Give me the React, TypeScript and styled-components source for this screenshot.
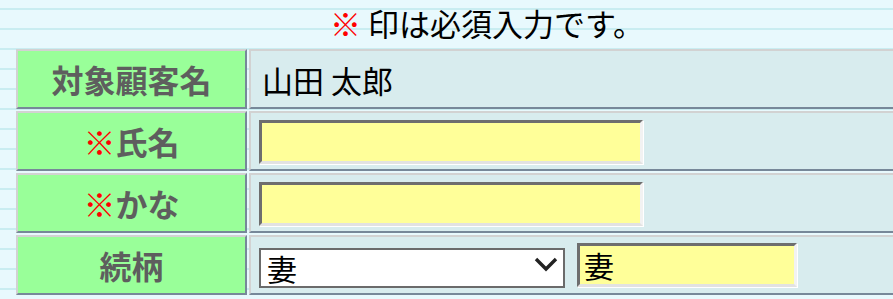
import React, { useState } from "react";
import styled, { createGlobalStyle } from "styled-components";

const GlobalStyle = createGlobalStyle`
  html, body {
    margin: 0;
    padding: 0;
    overflow: hidden;
  }
  body {
    font-family: "Noto Sans CJK JP", "Noto Sans", sans-serif;
    background-color: #e8f9fd;
    background-image: repeating-linear-gradient(
      to bottom,
      transparent 0px,
      transparent 8px,
      #c9edf1 8px,
      #c9edf1 10px,
      transparent 10px,
      transparent 20px
    );
  }
`;

const Page = styled.div`
  width: 960px;
  padding-left: 14px;
  box-sizing: border-box;
`;

const Notice = styled.div`
  height: 47px;
  line-height: 46px;
  text-align: center;
  font-size: 31px;
  color: #000;
`;

const Mark = styled.span`
  color: #ff0000;
`;

const FormTable = styled.table`
  border-collapse: separate;
  border-spacing: 2px;
  width: 944px;
`;

const LabelCell = styled.th`
  width: 227px;
  height: 56px;
  padding: 0;
  background: #99ff99;
  color: #5e5e5e;
  font-size: 32px;
  font-weight: bold;
  text-align: center;
  border-style: solid;
  border-width: 2px;
  border-color: #d2d2d2 #778899 #778899 #d2d2d2;
`;

const ReqMark = styled.span`
  color: #ff0000;
  font-weight: normal;
`;

const ValueCell = styled.td`
  height: 56px;
  padding: 0 0 0 8px;
  background: #d8ecee;
  font-size: 31px;
  color: #000;
  border-style: solid;
  border-width: 2px;
  border-color: #d2d2d2 #778899 #778899 #d2d2d2;
`;

const ValueText = styled.span`
  padding-left: 3px;
`;

const FieldRow = styled.div`
  display: flex;
  align-items: center;
  gap: 12px;
`;

const TextInput = styled.input<{ $w: number }>`
  width: ${(p) => p.$w}px;
  height: 44px;
  box-sizing: border-box;
  margin: 0;
  padding: 0 4px;
  background: #ffff99;
  font-family: inherit;
  font-size: 30px;
  color: #000;
  border-style: solid;
  border-width: 3px;
  border-color: #6e6e6e #f2f2f2 #e2e2e2 #6e6e6e;
  box-shadow: 1px 1px 0 #ffffff;
  outline: none;
`;

const SelectWrap = styled.div`
  position: relative;
  width: 306px;
  height: 40px;
`;

const Select = styled.select`
  appearance: none;
  width: 100%;
  height: 100%;
  box-sizing: border-box;
  margin: 0;
  padding: 0 0 0 6px;
  background: #ffffff;
  border: 2px solid #6b6b6b;
  border-radius: 0;
  font-family: inherit;
  font-size: 30px;
  line-height: 36px;
  color: #000;
  outline: none;
`;

const Chevron = styled.svg`
  position: absolute;
  right: 7px;
  top: 12px;
  pointer-events: none;
`;

const relations = ["妻", "夫", "子", "父", "母", "その他"];

const App: React.FC = () => {
  const [name, setName] = useState<string>("");
  const [kana, setKana] = useState<string>("");
  const [relation, setRelation] = useState<string>("妻");
  const [relationText, setRelationText] = useState<string>("妻");

  return (
    <>
      <GlobalStyle />
      <Page>
        <Notice>
          <Mark>※</Mark> 印は必須入力です。
        </Notice>
        <FormTable>
          <tbody>
            <tr>
              <LabelCell>対象顧客名</LabelCell>
              <ValueCell>
                <ValueText>山田 太郎</ValueText>
              </ValueCell>
            </tr>
            <tr>
              <LabelCell>
                <ReqMark>※</ReqMark>氏名
              </LabelCell>
              <ValueCell>
                <TextInput
                  $w={384}
                  value={name}
                  onChange={(e) => setName(e.target.value)}
                />
              </ValueCell>
            </tr>
            <tr>
              <LabelCell>
                <ReqMark>※</ReqMark>かな
              </LabelCell>
              <ValueCell>
                <TextInput
                  $w={384}
                  value={kana}
                  onChange={(e) => setKana(e.target.value)}
                />
              </ValueCell>
            </tr>
            <tr>
              <LabelCell>続柄</LabelCell>
              <ValueCell>
                <FieldRow>
                  <SelectWrap>
                    <Select
                      value={relation}
                      onChange={(e) => setRelation(e.target.value)}
                    >
                      {relations.map((r) => (
                        <option key={r} value={r}>
                          {r}
                        </option>
                      ))}
                    </Select>
                    <Chevron width="24" height="15" viewBox="0 0 24 15">
                      <path
                        d="M2 2 L12 12 L22 2"
                        fill="none"
                        stroke="#222"
                        strokeWidth="3.4"
                      />
                    </Chevron>
                  </SelectWrap>
                  <TextInput
                    $w={220}
                    value={relationText}
                    onChange={(e) => setRelationText(e.target.value)}
                  />
                </FieldRow>
              </ValueCell>
            </tr>
          </tbody>
        </FormTable>
      </Page>
    </>
  );
};

export default App;
